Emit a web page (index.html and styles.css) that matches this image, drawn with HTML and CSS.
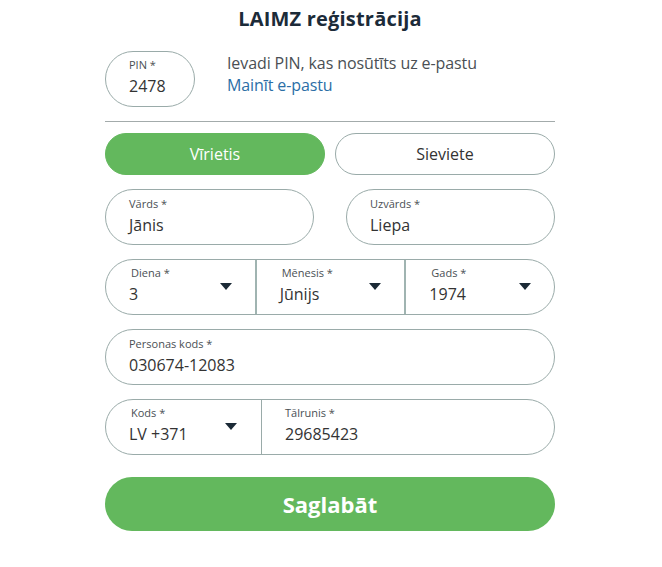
FILE: index.html
```html
<!DOCTYPE html>
<html>
  <head>
    <title>LAIMZ reģistrācija</title>
    <meta name="viewport" content="width=device-width, initial-scale=1.0" />
    <link rel="stylesheet" href="styles.css">
  </head>
  <body>
    <div class="container">
      <h1>LAIMZ reģistrācija</h1>

      <!-- PIN row -->
      <div class="pin-row">
        <div class="field pin-field">
          <span class="label">PIN *</span>
          <span class="value">2478</span>
        </div>
        <div class="pin-info">
          <p>Ievadi PIN, kas nosūtīts uz e-pastu</p>
          <a href="#">Mainīt e-pastu</a>
        </div>
      </div>

      <hr class="divider" />

      <!-- Gender -->
      <div class="gender">
        <button class="gender-btn active">Vīrietis</button>
        <button class="gender-btn">Sieviete</button>
      </div>

      <div class="row two-cols">
        <div class="field">
          <span class="label">Vārds *</span>
          <span class="value">Jānis</span>
        </div>
        <div class="field">
          <span class="label">Uzvārds *</span>
          <span class="value">Liepa</span>
        </div>
      </div>

      <!-- Birth date -->
      <div class="row field group date-group">
        <div class="segment select">
          <div class="seg-text">
            <span class="label">Diena *</span>
            <span class="value">3</span>
          </div>
          <span class="arrow"></span>
        </div>
        <div class="segment select sep-thick">
          <div class="seg-text">
            <span class="label">Mēnesis *</span>
            <span class="value">Jūnijs</span>
          </div>
          <span class="arrow"></span>
        </div>
        <div class="segment select sep-thick">
          <div class="seg-text">
            <span class="label">Gads *</span>
            <span class="value">1974</span>
          </div>
          <span class="arrow"></span>
        </div>
      </div>

      <div class="row field">
        <span class="label">Personas kods *</span>
        <span class="value">030674-12083</span>
      </div>

      <!-- Phone -->
      <div class="row field group phone-group">
        <div class="segment select">
          <div class="seg-text">
            <span class="label">Kods *</span>
            <span class="value">LV +371</span>
          </div>
          <span class="arrow"></span>
        </div>
        <div class="segment sep-thin">
          <div class="seg-text">
            <span class="label">Tālrunis *</span>
            <span class="value">29685423</span>
          </div>
        </div>
      </div>

      <button class="save-btn">Saglabāt</button>
    </div>
  </body>
</html>
```

FILE: styles.css
```css
/* Base styles */
body {
  font-family: "Open Sans", "Liberation Sans", sans-serif;
  margin: 0;
  padding: 0;
  background: #fff;
  color: #333;
}

.container {
  width: 450px;
  margin: 0 auto;
  transform: translateX(-1px);
}

h1 {
  text-align: center;
  font-size: 20px;
  line-height: 26px;
  font-weight: 700;
  color: #1c2b39;
  margin: 6px 0 0;
  letter-spacing: 0.2px;
}

/* Fields */
.field {
  box-sizing: border-box;
  height: 56px;
  border: 1px solid #9aaba9;
  border-radius: 28px;
  padding: 7px 23px 0;
  display: flex;
  flex-direction: column;
}

.label {
  font-size: 11px;
  line-height: 14px;
  color: #4a4f54;
}

.value {
  font-size: 16px;
  line-height: 22px;
  margin-top: 3px;
  color: #333;
}

.row {
  margin-top: 14px;
}

.two-cols {
  display: grid;
  grid-template-columns: 1fr 1fr;
  gap: 32px;
}

/* PIN */
.pin-row {
  display: flex;
  gap: 32px;
  margin-top: 19px;
}

.pin-field {
  width: 90px;
  padding-top: 6px;
}

.pin-info {
  font-size: 16px;
  line-height: 22px;
  padding-top: 1px;
  letter-spacing: -0.1px;
}

.pin-info p {
  margin: 0;
  color: #4a4f54;
}

.pin-info a {
  color: #2b6ea6;
  text-decoration: none;
}

.divider {
  border: none;
  border-top: 1px solid #a3abab;
  margin: 14px 0 0;
}

/* Gender */
.gender {
  display: grid;
  grid-template-columns: 1fr 1fr;
  gap: 10px;
  margin-top: 11px;
}

.gender-btn {
  font-family: inherit;
  font-size: 16px;
  height: 42px;
  border: 1px solid #9aaba9;
  border-radius: 21px;
  background: #fff;
  color: #333;
  cursor: pointer;
}

.gender-btn.active {
  background: #63b85d;
  border-color: #63b85d;
  color: #fff;
}

/* Grouped selects */
.group {
  flex-direction: row;
  padding: 0;
}

.segment {
  display: flex;
  align-items: center;
  padding: 0 23px;
  box-sizing: border-box;
}

.seg-text {
  display: flex;
  flex-direction: column;
  flex: 1;
  padding-bottom: 4px;
}

.select .label {
  padding-left: 2px;
}

.date-group .segment {
  width: 150px;
}

.date-group .segment:first-child {
  width: 149px;
}

.sep-thick {
  border-left: 2px solid #a0b4b1;
}

.sep-thin {
  border-left: 1px solid #9aaba9;
  flex: 1;
}

.phone-group .segment:first-child {
  width: 155px;
  padding-right: 24px;
}

.arrow {
  width: 0;
  height: 0;
  border-left: 6px solid transparent;
  border-right: 6px solid transparent;
  border-top: 7px solid #1b2a36;
  margin-top: -2px;
}

/* Save */
.save-btn {
  display: block;
  width: 100%;
  height: 54px;
  margin-top: 22px;
  border: none;
  border-radius: 27px;
  background: #63b85d;
  color: #fff;
  font-family: inherit;
  font-size: 22px;
  font-weight: 700;
  cursor: pointer;
}
```
